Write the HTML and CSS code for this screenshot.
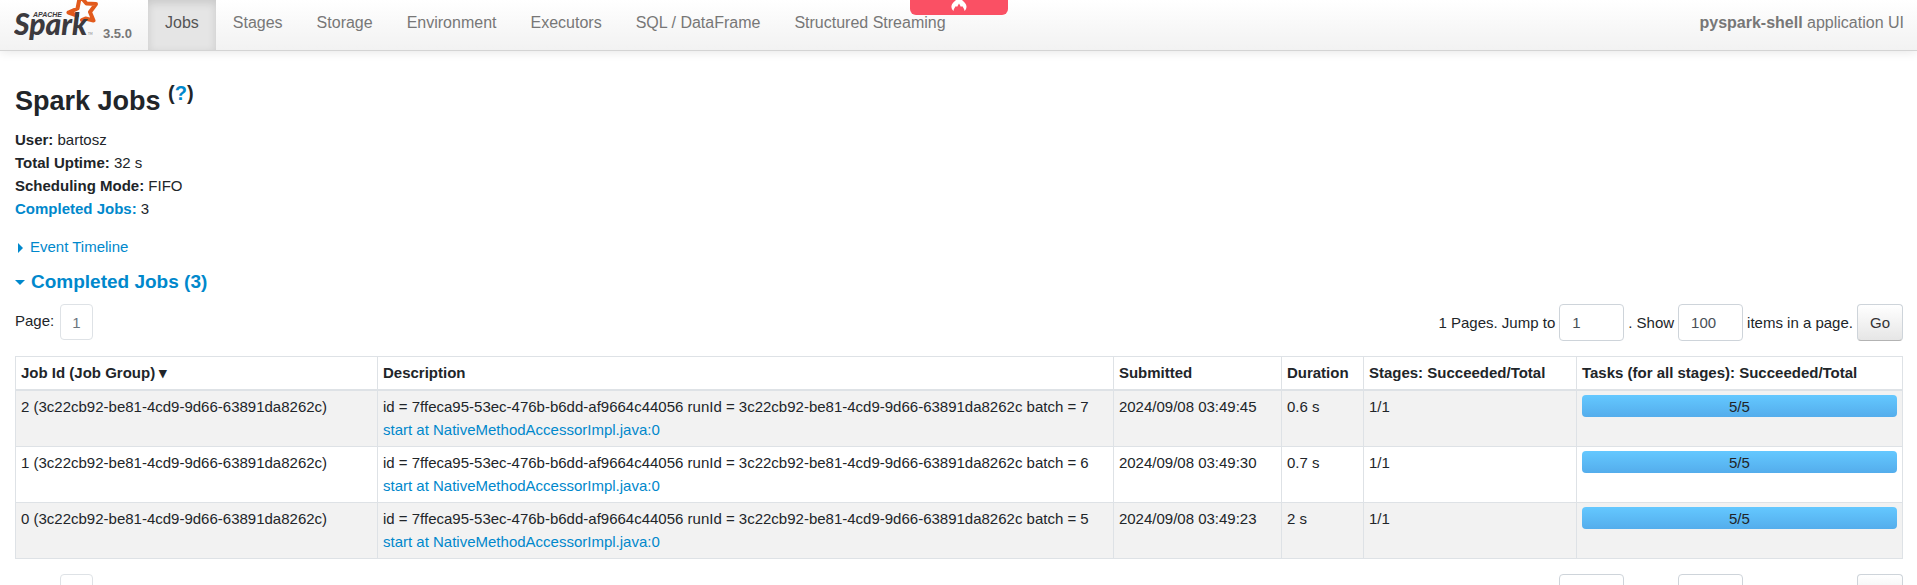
FILE: index.html
```html
<!DOCTYPE html>
<html lang="en">
<head>
<meta charset="utf-8">
<title>Spark Jobs</title>
<link rel="stylesheet" href="styles.css">
</head>
<body>
<header class="navbar">
  <a class="brand" href="#" aria-label="Apache Spark">
    <svg class="logo" viewBox="0 0 86 44" role="img" aria-label="Apache Spark">
      <path class="star" d="M54.500 12.500 63.500 8.500 66 -4 72.500 3.500 82 4 76 12 79.500 20.500 71.500 18.500 68 20M54.500 12.500 63 15.500"/>
      <text class="logo-small" x="19" y="17">APACHE</text>
      <text class="logo-word" x="0" y="35">Spark</text>
      <text class="logo-tm" x="74" y="35">TM</text>
    </svg>
    <span class="version">3.5.0</span>
  </a>
  <nav class="tabs">
    <a class="tab active" href="#">Jobs</a>
    <a class="tab" href="#">Stages</a>
    <a class="tab" href="#">Storage</a>
    <a class="tab" href="#">Environment</a>
    <a class="tab" href="#">Executors</a>
    <a class="tab" href="#">SQL / DataFrame</a>
    <a class="tab" href="#">Structured Streaming</a>
  </nav>
  <p class="app-name"><strong>pyspark-shell</strong> application UI</p>
  <div class="flame-badge">
    <svg class="flame" viewBox="0 0 16 12" aria-hidden="true"><path d="M5 0C3 2 0 4 .5 7.500 .8 9.500 2 10.500 2.500 11 2.500 8.500 4 7.500 5 6L6 7 8 3.500 10 7 11 6C12 7.500 13.500 8.500 13.500 11 14.500 10 15.500 8.500 15.500 6.500 15.500 4 13 2 11 0Z"/></svg>
  </div>
</header>
<main class="page">
  <h1 class="title">Spark Jobs <sup class="help">(<a href="#">?</a>)</sup></h1>
  <ul class="summary">
    <li><strong>User:</strong> bartosz</li>
    <li><strong>Total Uptime:</strong> 32 s</li>
    <li><strong>Scheduling Mode:</strong> FIFO</li>
    <li><a href="#completed"><strong>Completed Jobs:</strong></a> 3</li>
  </ul>
  <a class="timeline" href="#"><span class="arrow arrow-right"></span>Event Timeline</a>
  <h2 class="section" id="completed"><a href="#completed"><span class="arrow arrow-down"></span>Completed Jobs (3)</a></h2>

  <div class="pager">
    <div class="pages"><span class="page-label">Page:</span><a class="page-link" href="#">1</a></div>
    <form class="jump">
      <label for="jump-top">1 Pages. Jump to</label>
      <input class="field" id="jump-top" type="text" value="1">
      <label for="size-top">. Show</label>
      <input class="field" id="size-top" type="text" value="100">
      <span>items in a page.</span>
      <button class="go" type="button">Go</button>
    </form>
  </div>

  <table class="jobs">
    <colgroup><col class="c-id"><col class="c-desc"><col class="c-sub"><col class="c-dur"><col class="c-stages"><col></colgroup>
    <thead>
      <tr><th>Job Id (Job Group) ▾</th><th>Description</th><th>Submitted</th><th>Duration</th><th>Stages: Succeeded/Total</th><th>Tasks (for all stages): Succeeded/Total</th></tr>
    </thead>
    <tbody>
      <tr>
        <td>2 (3c22cb92-be81-4cd9-9d66-63891da8262c)</td>
        <td>id = 7ffeca95-53ec-476b-b6dd-af9664c44056 runId = 3c22cb92-be81-4cd9-9d66-63891da8262c batch = 7<br><a href="#">start at NativeMethodAccessorImpl.java:0</a></td>
        <td>2024/09/08 03:49:45</td><td>0.6 s</td><td>1/1</td>
        <td><div class="progress">5/5</div></td>
      </tr>
      <tr>
        <td>1 (3c22cb92-be81-4cd9-9d66-63891da8262c)</td>
        <td>id = 7ffeca95-53ec-476b-b6dd-af9664c44056 runId = 3c22cb92-be81-4cd9-9d66-63891da8262c batch = 6<br><a href="#">start at NativeMethodAccessorImpl.java:0</a></td>
        <td>2024/09/08 03:49:30</td><td>0.7 s</td><td>1/1</td>
        <td><div class="progress">5/5</div></td>
      </tr>
      <tr>
        <td>0 (3c22cb92-be81-4cd9-9d66-63891da8262c)</td>
        <td>id = 7ffeca95-53ec-476b-b6dd-af9664c44056 runId = 3c22cb92-be81-4cd9-9d66-63891da8262c batch = 5<br><a href="#">start at NativeMethodAccessorImpl.java:0</a></td>
        <td>2024/09/08 03:49:23</td><td>2 s</td><td>1/1</td>
        <td><div class="progress">5/5</div></td>
      </tr>
    </tbody>
  </table>

  <div class="pager">
    <div class="pages"><span class="page-label">Page:</span><a class="page-link" href="#">1</a></div>
    <form class="jump">
      <label for="jump-bottom">1 Pages. Jump to</label>
      <input class="field" id="jump-bottom" type="text" value="1">
      <label for="size-bottom">. Show</label>
      <input class="field" id="size-bottom" type="text" value="100">
      <span>items in a page.</span>
      <button class="go" type="button">Go</button>
    </form>
  </div>
</main>
</body>
</html>
```

FILE: styles.css
```css
* { box-sizing: border-box; }
html { scrollbar-width: none; }
body {
  margin: 0;
  background: #fff;
  color: #212529;
  font: 15px/23px "Liberation Sans", Arial, sans-serif;
}
a { color: #0088cc; text-decoration: none; }

.navbar {
  position: relative;
  display: flex;
  align-items: stretch;
  height: 51px;
  padding-right: 13px;
  border-bottom: 1px solid #d4d4d4;
  background: linear-gradient(#fff, #f2f2f2);
  box-shadow: 0 1px 10px rgba(0, 0, 0, .1);
  color: #777;
  font-size: 16px;
}
.brand { display: flex; width: 148px; padding-left: 14px; color: #777; }
.logo { flex: none; width: 86px; height: 44px; }
.star { fill: none; stroke: #e25a1c; stroke-width: 4; stroke-linejoin: round; stroke-linecap: round; }
.logo-word { fill: #3c3a3e; font: italic 900 30px Lato, sans-serif; }
.logo-small { fill: #3c3a3e; font: italic 700 7px "Liberation Sans", sans-serif; }
.logo-tm { fill: #777; font: 3px Lato, sans-serif; }
.version { padding: 22px 0 0 3px; font-size: 13px; font-weight: 700; }
.tabs { display: flex; }
.tab { padding: 11px 17px; color: #777; }
.tab.active { background: #e5e5e5; box-shadow: inset 0 3px 8px rgba(0, 0, 0, .125); color: #555; }
.app-name { margin: 0 0 0 auto; padding-top: 11px; }
.flame-badge {
  position: absolute;
  top: 0;
  left: calc(50% - 49px);
  width: 98px;
  height: 15px;
  border-radius: 0 0 6px 6px;
  background: #fa5064;
}
.flame { display: block; width: 16px; height: 12px; margin: 0 auto; fill: #fff; }

.page { padding: 32px 14px 0 15px; }
.title { margin: 0 0 8px; font-size: 27px; line-height: 37px; }
.help { font-size: 20px; line-height: 0; }
.summary { margin: 0 0 15px; padding: 0; list-style: none; }
.timeline { display: block; margin-bottom: 11px; }
.section { margin: 0 0 10px; font-size: 19px; line-height: 25px; }
.arrow { display: inline-block; border: 5px solid transparent; vertical-align: middle; }
.arrow-right { margin: 0 2px 0 3px; border-left-color: #0088cc; }
.arrow-down { margin-right: 6px; border-top-color: #0088cc; border-bottom-width: 0; }

.pager { display: flex; justify-content: space-between; }
.pages { display: flex; }
.page-label { margin-right: 6px; padding-top: 5px; }
.page-link {
  height: 36px;
  padding: 6px 11px;
  border: 1px solid #dee2e6;
  border-radius: 4px;
  color: #6c757d;
}
.jump { display: flex; align-items: center; gap: 4px; }
.field {
  width: 65px;
  height: 37px;
  padding: 0 12px;
  border: 1px solid #ced4da;
  border-radius: 4px;
  color: #495057;
  font: inherit;
}
.go {
  height: 37px;
  padding: 0 12px;
  border: 1px solid #ced4da;
  border-bottom-color: #b3b3b3;
  border-radius: 4px;
  background: linear-gradient(#fff, #e6e6e6);
  color: #333;
  font: inherit;
}

.jobs {
  width: 100%;
  margin: 15px 0;
  border-collapse: collapse;
  table-layout: fixed;
}
.c-id { width: 362px; }
.c-desc { width: 39%; }
.c-sub { width: 168px; }
.c-dur { width: 82px; }
.c-stages { width: 213px; }
.jobs th, .jobs td { padding: 4px 5px 5px; border: 1px solid #dee2e6; text-align: left; vertical-align: top; }
.jobs th { border-bottom-width: 2px; }
.jobs tbody tr:nth-child(odd) { background: #f2f2f2; }
.progress {
  height: 22px;
  border-radius: 4px;
  background: linear-gradient(#64c8ff, #54adec);
  line-height: 24px;
  text-align: center;
}
```
